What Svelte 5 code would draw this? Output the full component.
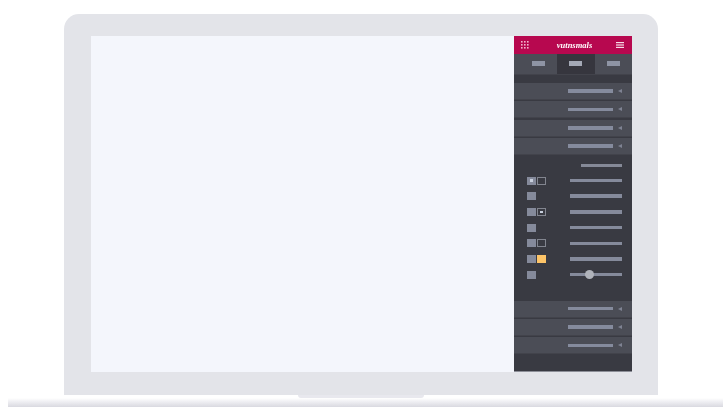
<script>
  const tabs = [1, 2, 3];
  const topRows = [1, 2, 3, 4];
  const bottomRows = [1, 2, 3];
  // kind of the second box next to each setting line
  const settings = ['first', '', 'dot', '', 'empty', 'yellow', 'slider'];
</script>

<div class="page">
  <div class="laptop">
    <div class="screen">
      <div class="canvas"></div>
      <aside class="panel">
        <header class="brand">
          <svg class="grid-icon" width="8" height="8" viewBox="0 0 8 8" fill="#f0b4cc">
            {#each [0, 3, 6] as y}
              {#each [0, 3, 6] as x}
                <rect x={x} y={y} width="1.6" height="1.6" />
              {/each}
            {/each}
          </svg>
          <span class="logo">vutnsmals</span>
          <svg class="menu-icon" width="8" height="6" viewBox="0 0 8 6" fill="#f6dbe6">
            <rect y="0" width="8" height="1.2" />
            <rect y="2.4" width="8" height="1.2" />
            <rect y="4.8" width="8" height="1.2" />
          </svg>
        </header>

        <div class="tabs">
          {#each tabs as t}
            <div class="tab" class:active={t === 2}><span class="tab-line"></span></div>
          {/each}
        </div>

        <div class="rows">
          {#each topRows as r}
            <div class="row"><span class="row-line"></span><span class="arrow"></span></div>
          {/each}
        </div>

        <div class="settings">
          <div class="heading"><span class="heading-line"></span></div>
          {#each settings as s}
            <div class="setting">
              <div class="boxes">
                <span class="box" class:first={s === 'first'}></span>
                {#if s === 'first' || s === 'empty'}
                  <span class="box outline"></span>
                {:else if s === 'dot'}
                  <span class="box outline dot"></span>
                {:else if s === 'yellow'}
                  <span class="box yellow"></span>
                {/if}
              </div>
              <div class="line" class:slider={s === 'slider'}>
                {#if s === 'slider'}<span class="knob"></span>{/if}
              </div>
            </div>
          {/each}
        </div>

        <div class="rows">
          {#each bottomRows as r}
            <div class="row"><span class="row-line"></span><span class="arrow"></span></div>
          {/each}
        </div>
      </aside>
    </div>
  </div>
  <div class="notch"></div>
  <div class="base"></div>
</div>

<style>
  :global(body) {
    background: #fff;
  }
  .page {
    width: 723px;
    height: 414px;
    padding-top: 14px;
    box-sizing: border-box;
    overflow: hidden;
    display: flex;
    flex-direction: column;
    filter: blur(0.35px);
  }
  .laptop {
    width: 594px;
    height: 381px;
    margin-left: 64px;
    padding: 22px 26px 23px 27px;
    box-sizing: border-box;
    background: #e3e4e9;
    border-radius: 15px 15px 0 0;
    flex-shrink: 0;
  }
  .screen {
    display: flex;
    height: 100%;
    background: #f4f6fc;
  }
  .canvas {
    flex: 1;
  }
  .panel {
    width: 118.5px;
    background: #393a42;
    display: flex;
    flex-direction: column;
    border-bottom: 1px solid #8d8f98;
    box-sizing: border-box;
  }
  .brand {
    height: 18px;
    background: #b7084f;
    display: flex;
    align-items: center;
    justify-content: space-between;
    padding: 0 8px 0 7.5px;
  }
  .logo {
    font-family: "Liberation Serif", serif;
    font-style: italic;
    font-weight: bold;
    font-size: 8.5px;
    color: #fff;
    margin-left: 4px;
  }
  .tabs {
    display: flex;
    height: 21px;
    background: #4b4d56;
    border-bottom: 1px solid #42434b;
    box-sizing: border-box;
  }
  .tab {
    display: flex;
    align-items: center;
    justify-content: center;
    flex: 0 0 37.5px;
    padding-bottom: 1px;
    box-sizing: border-box;
  }
  .tab:first-child {
    flex: 1;
    padding-left: 6px;
  }
  .tab.active {
    background: #36363e;
  }
  .tab-line {
    width: 13px;
    height: 5px;
    background: #8e94a4;
  }
  .tab.active .tab-line {
    background: #a4a9b6;
  }
  .rows {
    display: flex;
    flex-direction: column;
    gap: 2.4px;
    margin-top: 8px;
  }
  .settings + .rows {
    margin-top: 0;
  }
  .row {
    height: 16px;
    background: #4b4d56;
    box-shadow: 0 1px 0 #42434b;
    display: flex;
    align-items: center;
    justify-content: flex-end;
    padding-right: 10px;
  }
  .row-line {
    width: 45px;
    height: 3.5px;
    background: #858b9d;
    margin-right: 5px;
  }
  .arrow {
    width: 0;
    height: 0;
    border-top: 2.5px solid transparent;
    border-bottom: 2.5px solid transparent;
    border-right: 4px solid #7e8292;
  }
  .settings {
    height: 146.5px;
    padding: 9.5px 10px 0 13.5px;
    box-sizing: border-box;
  }
  .heading {
    display: flex;
    justify-content: flex-end;
    height: 3px;
    margin-bottom: 6px;
  }
  .heading-line {
    width: 41px;
    height: 3.5px;
    background: #858997;
  }
  .setting {
    display: flex;
    align-items: center;
    justify-content: space-between;
    height: 15.7px;
  }
  .boxes {
    display: flex;
    gap: 1px;
  }
  .box {
    width: 9px;
    height: 8px;
    background: #858a9b;
    box-sizing: border-box;
    position: relative;
  }
  .box.first::after {
    content: '';
    position: absolute;
    left: 3px;
    top: 2px;
    width: 3px;
    height: 3px;
    background: #c8cfdd;
  }
  .box.outline {
    background: transparent;
    border: 1px solid #82858f;
  }
  .box.dot::after {
    content: '';
    position: absolute;
    left: 2px;
    top: 2px;
    width: 3px;
    height: 2px;
    background: #c8cfdd;
  }
  .box.yellow {
    background: #fdc468;
  }
  .line {
    width: 52px;
    height: 3.5px;
    background: #858a9b;
    position: relative;
  }
  .knob {
    position: absolute;
    left: 14.5px;
    top: -3px;
    width: 9px;
    height: 9px;
    border-radius: 50%;
    background: #b0b3bb;
  }
  .notch {
    flex-shrink: 0;
    width: 126px;
    height: 3px;
    margin-left: 298px;
    background: #e8e8ee;
    border-radius: 0 0 4px 4px;
  }
  .base {
    flex-shrink: 0;
    height: 9px;
    margin-left: 8px;
    background: linear-gradient(#ffffff, #f3f3f6 30%, #d9d9e0);
  }
</style>
